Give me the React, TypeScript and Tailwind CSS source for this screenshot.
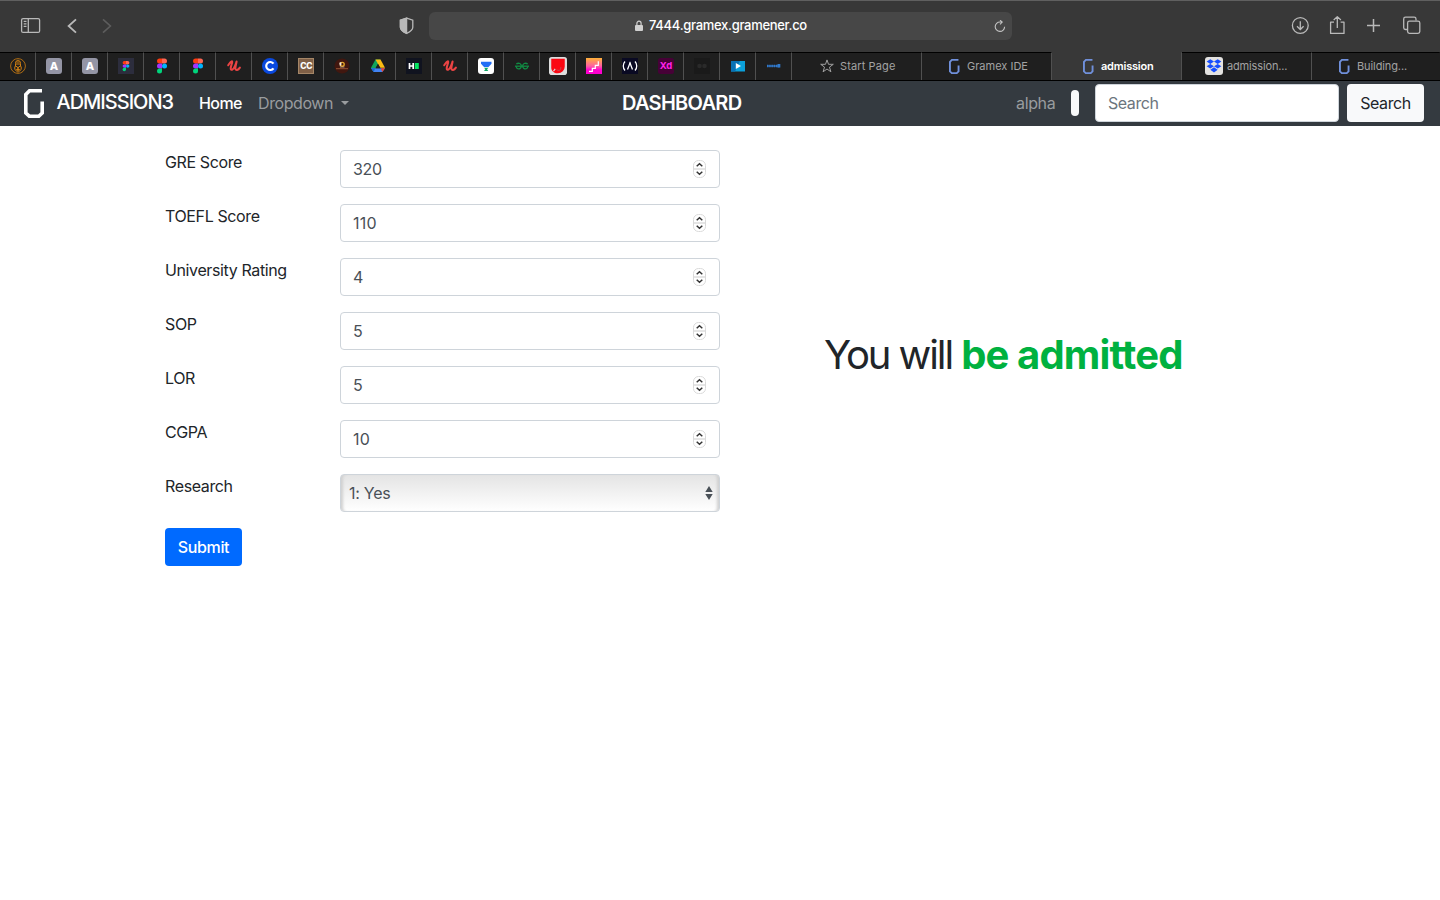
import React from "react";

const svg = (children: React.ReactNode, size = 16) => (
  <svg width={size} height={size} viewBox="0 0 16 16" className="shrink-0">
    {children}
  </svg>
);

const Letter = ({ text, fill, size, y = 12, weight = 800, x = 8, spacing = 0 }: { text: string; fill: string; size: number; y?: number; weight?: number; x?: number; spacing?: number }) => (
  <text x={x} y={y} fill={fill} fontSize={size} fontWeight={weight} letterSpacing={spacing} textAnchor="middle" fontFamily="Inter, sans-serif">
    {text}
  </text>
);

const Figma = () =>
  svg(
    <>
      <path d="M5.500 .5H8v5H5.500a2.500 2.500 0 0 1 0-5z" fill="#ff3b10" />
      <path d="M8 .5h2.500a2.500 2.500 0 0 1 0 5H8z" fill="#ff6654" />
      <path d="M5.500 5.500H8v5H5.500a2.500 2.500 0 0 1 0-5z" fill="#a233ff" />
      <circle cx="10.500" cy="8" r="2.500" fill="#00b4ff" />
      <path d="M5.500 10.500H8V13a2.500 2.500 0 1 1-2.500-2.500z" fill="#00d47c" />
    </>
  );

const FigmaBoxed = () =>
  svg(
    <>
      <rect width="16" height="16" fill="#2c2d3d" />
      <path d="M6.300 3H8v3.400H6.300a1.700 1.700 0 0 1 0-3.400z" fill="#ff3b10" />
      <path d="M8 3h1.700a1.700 1.700 0 0 1 0 3.400H8z" fill="#ff6654" />
      <path d="M6.300 6.400H8v3.400H6.300a1.700 1.700 0 0 1 0-3.400z" fill="#a233ff" />
      <circle cx="9.700" cy="8.100" r="1.700" fill="#00b4ff" />
      <path d="M6.300 9.800H8v1.700a1.700 1.700 0 1 1-1.700-1.700z" fill="#00d47c" />
    </>
  );

const LetterA = () =>
  svg(
    <>
      <rect width="16" height="16" rx="3" fill="#9495a5" />
      <Letter text="A" fill="#fff" size={11} />
    </>
  );

const Udemy = () =>
  svg(
    <path
      d="M2.200 7.300C3.300 5.500 4.800 3.400 6 3.200c1 .2-1.300 4.800-1.300 7.200 0 2.800 2.800 1.200 4.300-2.600l1.600-4.300c-.3 2.300-1.300 4.900-1.200 7 .2 2.500 2.700 1.800 4.500-.9"
      fill="none"
      stroke="#ec4444"
      strokeWidth="2"
      strokeLinecap="round"
      strokeLinejoin="round"
    />
  );

const pinned: React.ReactNode[] = [
  svg(
    <g fill="none" stroke="#d07f11">
      <circle cx="8" cy="8" r="7.400" strokeWidth=".8" />
      <path d="M5.500 5.500c0-4.300 5-4.300 5 0v3H9L8 10 7 8.500H5.500zM6.300 4h3.400M6 6h4M4.800 8.500v3L8 14.300l3.200-2.800v-3M6.200 11.500h3.600" />
      <path d="M8 9.500v3.500" strokeWidth="1.500" />
    </g>
  ),
  <LetterA />,
  <LetterA />,
  <FigmaBoxed />,
  <Figma />,
  <Figma />,
  <Udemy />,
  svg(
    <>
      <circle cx="8" cy="8" r="8" fill="#0a49df" />
      <path d="M11.500 5.700a4 4 0 1 0 0 4.600" fill="none" stroke="#fff" strokeWidth="2.200" />
    </>
  ),
  svg(
    <>
      <rect width="16" height="16" fill="#806047" />
      <rect x=".5" y=".5" width="15" height="15" fill="none" stroke="#a58667" />
      <Letter text="CC" fill="#fff" size={8.5} y={11} x={8.2} spacing={-0.4} />
    </>
  ),
  svg(
    <>
      <circle cx="8" cy="8" r="7.500" fill="#41170f" />
      <circle cx="8.300" cy="6.300" r="1.900" fill="none" stroke="#e3a326" strokeWidth="1.400" />
      <path d="M5.300 4.800 7.300 4v2.500L6 8.500z" fill="#f1e9dd" />
      <path d="M2 10.700h12" stroke="#ac633c" strokeWidth=".8" />
      <path d="M6 9h4.500" stroke="#d8bfa8" strokeWidth=".7" />
    </>
  ),
  svg(
    <>
      <path d="M5.500 1.500h5L8 6 3.800 14 1 9.800z" fill="#12a45c" />
      <path d="M5.500 1.500h5l4.500 8.300h-5z" fill="#fbbc13" />
      <path d="M1 10.200h14L12.300 14H3.700z" fill="#4383f2" />
      <path d="M1 10.200h4.200L3.700 14z" fill="#1967d2" />
      <path d="M10.800 10.200H15L12.300 14z" fill="#ea4335" />
      <path d="M8 5.800 5.400 10.200h5.200z" fill="#1f1f1f" />
    </>
  ),
  svg(
    <>
      <rect width="16" height="16" fill="#10131f" />
      <path d="M3.500 5v6M7.200 5v6M3.500 8h3.700" stroke="#fff" strokeWidth="1.700" />
      <rect x="8.800" y="5" width="4" height="6" fill="#06e462" />
    </>
  ),
  <Udemy />,
  svg(
    <>
      <rect width="16" height="16" rx="3" fill="#fff" />
      <path d="M3 3.700h10.500v2l-3 3.400h-4.500l-3-3.400z" fill="#226ff5" />
      <path d="M6 9.800h4.500L9 11.300l1.300 1.700H6l1.300-1.700z" fill="#12a765" />
    </>
  ),
  svg(
    <g fill="none" stroke="#118b43" strokeWidth="1.300">
      <path d="M2.300 5.800c2.700-1.300 5-.2 5 2.200S5.500 11 4.300 10.800c-1.500-.2-2.200-1.500-2-2.600" />
      <path d="M13.700 5.800c-2.700-1.300-5-.2-5 2.200s1.800 3 3 2.800c1.500-.2 2.200-1.500 2-2.600" />
      <path d="M1 8.200h14" />
    </g>
  ),
  svg(
    <>
      <rect width="16" height="16" rx="2.500" fill="#dedede" />
      <path d="M2 1.500h12v7A6 6 0 0 1 8 14.500C4 14.500 2 12 2 9.500z" fill="#fb0712" />
      <path d="M10.500 9v.8A2 2 0 0 1 6.800 11" fill="none" stroke="#b9505a" strokeWidth=".8" />
      <path d="m4 12.500 1.500-2" stroke="#dedede" />
    </>,
    18
  ),
  svg(
    <>
      <defs>
        <linearGradient id="sunset" x1="0" y1="0" x2="0" y2="1">
          <stop offset="0" stopColor="#ffb338" />
          <stop offset=".5" stopColor="#ff61a0" />
          <stop offset=".75" stopColor="#ff00cf" />
        </linearGradient>
      </defs>
      <rect width="16" height="16" fill="url(#sunset)" />
      <path d="M3 13.300h3.300v-3h3v-3h3v-4" fill="none" stroke="#fff" strokeWidth="1.200" />
    </>
  ),
  svg(
    <>
      <rect width="16" height="16" fill="#0a0a23" />
      <path d="M3 3.500c-2.300 2.500-2.300 6.500 0 9M13 3.500c2.300 2.500 2.300 6.500 0 9M5.500 11.500 8 5l2.500 6.500" fill="none" stroke="#fff" strokeWidth="1.300" />
      <path d="m7 6.300 1-2.500 1 2.500z" fill="#fff" />
    </>
  ),
  svg(
    <>
      <rect width="16" height="16" rx="2.500" fill="#470137" />
      <Letter text="Xd" fill="#ff20ea" size={9.5} y={11.4} weight={700} />
    </>
  ),
  svg(
    <>
      <rect width="16" height="16" fill="#1a1a1a" />
      <circle cx="5.500" cy="8" r="2.300" fill="#2a2a2a" />
      <circle cx="10.500" cy="8" r="2.300" fill="#2a2a2a" />
    </>
  ),
  svg(
    <>
      <rect x="1" y="3" width="14" height="10.500" fill="#0ba0da" />
      <path d="M1 3h9L5 13.500H1z" fill="#0871b5" />
      <path d="M5.800 5 11 8l-5.200 3z" fill="#fff" />
    </>
  ),
  svg(
    <>
      <path d="M1 8h13" stroke="#3079cb" strokeWidth="2.600" strokeDasharray="1.500 .7" />
      <path d="M1 8h13" stroke="#3079cb" strokeWidth="1" />
      <path d="M11.500 6h2.800v3.500h-3z" fill="#3079cb" />
    </>
  ),
];

const GMark = ({ className, stroke }: { className: string; stroke: string }) => (
  <svg viewBox="0 0 20 29" className={className} fill="none" stroke={stroke} strokeWidth="3.600" preserveAspectRatio="none">
    <path d="M18 1.800H5.500L1.800 5.500V24l3.500 3.200h9.500l3.400-3.200V12.500" />
  </svg>
);

const Star = () => (
  <svg width="14" height="14" viewBox="0 0 14 14" fill="none" stroke="#a0a0a0" className="-mt-[2px]">
    <path d="m7 .9 1.500 4.400h4.800L9.500 8.100l1.400 4.700L7 10l-3.900 2.800 1.400-4.700L.7 5.300h4.800z" strokeLinejoin="round" />
  </svg>
);

const Dropbox = () => (
  <svg width="18" height="18" viewBox="0 0 18 18" className="-mt-px">
    <rect width="18" height="18" rx="3" fill="#e4e3e1" />
    <path d="m5.300 2.300 3.700 2.300-3.700 2.300-3.700-2.300zM12.700 2.300l3.700 2.300-3.700 2.300L9 4.600zM5.300 6.900 9 9.200l-3.700 2.300-3.700-2.300zM12.700 6.900l3.700 2.300-3.700 2.300L9 9.200zM9 10.200l3.700 2.500L9 15.500l-3.700-2.800z" fill="#174eff" />
  </svg>
);

const TabMark = () => <GMark className="-mt-px h-[15px] w-[10.500px]" stroke="#7090db" />;

const tabs = [
  { label: "Start Page", icon: <Star />, pad: "pl-[28px] gap-[6px]", text: "tracking-[0.12px]" },
  { label: "Gramex IDE", icon: <TabMark />, pad: "pl-[27px] gap-[7.500px]", text: "tracking-[0px]" },
  { label: "admission", icon: <TabMark />, pad: "pl-[31px] gap-[7.500px]", text: "tracking-[-0.2px]", active: true },
  { label: "admission...", icon: <Dropbox />, pad: "pl-[23px] gap-[4px]", text: "tracking-[-0.15px]" },
  { label: "Building...", icon: <TabMark />, pad: "pl-[27px] gap-[7.500px]", text: "tracking-[-0.1px]" },
];

const fields = [
  { label: "GRE Score", value: "320" },
  { label: "TOEFL Score", value: "110" },
  { label: "University Rating", value: "4" },
  { label: "SOP", value: "5" },
  { label: "LOR", value: "5" },
  { label: "CGPA", value: "10" },
];

const Toolbar = () => (
  <div className="flex h-[52px] items-center border-t border-[#606060] bg-[#383838]">
    <svg width="1440" height="51" viewBox="0 1 1440 51" fill="none" stroke="#b9b9b9" strokeWidth="1.300" className="w-[429px] shrink-0" preserveAspectRatio="xMinYMin slice">
      <rect x="21.600" y="18.600" width="18" height="13.800" rx="1.500" />
      <path d="M28.300 18.600v13.800M23.700 21.300h2.800M23.700 23.800h2.800M23.700 26.300h2.800" />
      <path d="m76 19.300-7.400 6.700 7.400 6.700" strokeWidth="1.800" />
      <path d="m103 19.300 7.400 6.700-7.400 6.700" stroke="#5d5d5d" strokeWidth="1.600" />
      <path d="m406.600 18.200 6.200 2v7c0 3-3 4.700-6.200 6.100-3.200-1.400-6.200-3.100-6.200-6.100v-7z" />
      <path d="m406.600 18.200-6.200 2v7c0 3 3 4.700 6.200 6.100z" fill="#b9b9b9" />
    </svg>
    <div className="mb-px flex h-[28px] w-[583px] shrink-0 items-center rounded-[6px] bg-[#474747] pl-[206px]">
      <svg width="8" height="12" viewBox="0 0 8 12" fill="none" stroke="#d0d0d0" strokeWidth="1.200">
        <rect x="0" y="5" width="8" height="6" rx="1" fill="#d0d0d0" stroke="none" />
        <path d="M1.900 5.500V3.300a2.100 2.100 0 0 1 4.200 0v2.200" />
      </svg>
      <span className="ml-[6px] w-[159px] whitespace-nowrap text-[13px] font-medium tracking-[-0.3px] text-white">7444.gramex.gramener.co</span>
      <svg width="12" height="13" viewBox="0 0 12 13" className="ml-auto mr-[6px]" fill="none" stroke="#c2c2c2" strokeWidth="1.100">
        <path d="M10.600 6.700A4.700 4.700 0 1 1 6 2h2M6 .2 8.200 2.100 6 4.300" />
      </svg>
    </div>
    <svg height="51" viewBox="1012 1 428 51" fill="none" stroke="#b9b9b9" strokeWidth="1.300" className="w-[428px] shrink-0">
      <circle cx="1300.300" cy="25.500" r="7.900" />
      <path d="M1300.300 21.300v8M1297 26.300l3.300 3.200 3.300-3.200" />
      <path d="M1334 22.200h-3.400v11.200h13.400V22.200h-3.400M1337.300 28V16.800M1333.700 20l3.600-3.400 3.600 3.400" strokeLinejoin="round" />
      <path d="M1373.500 19v13M1367 25.500h13" strokeWidth="1.500" />
      <rect x="1407.600" y="21.100" width="12.200" height="12.200" rx="1.800" />
      <path d="M1407 29.500h-1.500a1.800 1.800 0 0 1-1.800-1.800v-8.700a1.800 1.800 0 0 1 1.800-1.800h8.700a1.800 1.800 0 0 1 1.800 1.800v1.500" />
    </svg>
  </div>
);

const TabBar = () => (
  <div className="flex h-[29px] border-b border-black">
    {pinned.map((icon, i) => (
      <div key={i} className="flex w-[36px] shrink-0 items-center justify-center border-r border-t border-r-[#505050] border-t-black bg-[#1f1f1f] pb-px">
        {icon}
      </div>
    ))}
    {tabs.map((t, i) => (
      <div
        key={i}
        className={`flex shrink-0 items-center whitespace-nowrap border-r border-t text-[11px] ${t.pad} ${i === 4 ? "w-[128px] border-r-transparent" : "w-[130px] border-r-[#505050]"} ${
          t.active ? "border-t-transparent bg-[#383838] font-semibold text-white" : "border-t-black bg-[#1f1f1f] text-[#a3a3a3]"
        }`}
      >
        {t.icon}
        <span className={t.text}>{t.label}</span>
      </div>
    ))}
  </div>
);

const Navbar = () => (
  <nav className="flex h-[45px] items-center whitespace-nowrap bg-[#343a40] pb-[2px] pl-[24px] pr-[16px]">
    <GMark className="mt-px h-[29px] w-[20px] shrink-0" stroke="#ffffff" />
    <span className="ml-[12.500px] w-[142.500px] shrink-0 pb-px text-[20px] font-medium tracking-[-1px] text-white">ADMISSION3</span>
    <span className="w-[59px] shrink-0 text-[16px] font-medium tracking-[-0.6px] text-white">Home</span>
    <span className="w-[83px] shrink-0 text-[16px] tracking-[-0.42px] text-[#999c9f]">Dropdown</span>
    <svg width="8" height="4" viewBox="0 0 8 4" fill="#999c9f">
      <path d="M0 0h8L4 4z" />
    </svg>
    <span className="ml-[273px] w-[394px] shrink-0 text-[20px] font-semibold tracking-[-0.7px] text-white">DASHBOARD</span>
    <span className="w-[55px] shrink-0 text-[16px] tracking-[-0.35px] text-[#999c9f]">alpha</span>
    <span className="h-[26px] w-[8px] shrink-0 rounded-[4px] bg-[#f8f9fa]" />
    <div className="ml-[16px] flex h-[38px] w-[244px] shrink-0 items-center rounded-[4px] border border-[#ced4da] bg-white pl-[12px] text-[16px] tracking-[-0.45px] text-[#6c757d]">Search</div>
    <button className="ml-[8px] h-[38px] w-[77px] shrink-0 rounded-[4px] bg-[#f8f9fa] text-[16px] tracking-[-0.4px] text-[#212529]">Search</button>
  </nav>
);

const Stepper = () => (
  <svg width="13" height="18" viewBox="0 0 13 18" fill="none">
    <rect x=".5" y=".5" width="12" height="17" rx="5" fill="#fff" stroke="#dadada" />
    <path d="M1 9h11" stroke="#dddddd" strokeWidth="1.500" />
    <path d="m3.700 6.300 2.800-2.500 2.800 2.500M3.700 11.700l2.800 2.500 2.800-2.500" stroke="#333" strokeWidth="1.500" />
  </svg>
);

export default function App() {
  return (
    <div className="flex h-[900px] w-[1440px] flex-col overflow-hidden bg-white font-['Inter','Liberation_Sans',sans-serif] text-[#212529]">
      <Toolbar />
      <TabBar />
      <Navbar />
      <main className="flex pl-[165px] pt-[24px] text-[16px] leading-[24px] tracking-[-0.38px]">
        <form className="flex w-[555px] flex-col gap-[16px]">
          {fields.map((f) => (
            <div key={f.label} className="flex h-[38px]">
              <label className="w-[175px]">{f.label}</label>
              <div className="flex flex-1 items-center justify-between rounded-[4px] border border-[#ced4da] pl-[12px] pr-[13px] text-[#495057]">
                <span className={f.value === "320" ? "tracking-[-0.3px]" : "tracking-[0.2px]"}>{f.value}</span>
                <Stepper />
              </div>
            </div>
          ))}
          <div className="flex h-[38px]">
            <label className="w-[175px]">Research</label>
            <div className="flex flex-1 items-center justify-between rounded-[4px] border border-[#ced4da] bg-linear-to-b from-[#e4e4e4] to-white pl-[8px] pr-[6px] text-[#495057] shadow-[inset_4px_0_3px_-2px_#d0d0d0,inset_-4px_0_3px_-2px_#d0d0d0]">
              <span className="tracking-[-0.25px]">1: Yes</span>
              <svg width="8" height="14" viewBox="0 0 8 14" fill="#495057">
                <path d="M.3 6h7.400L4 0zM.3 8h7.400L4 14z" />
              </svg>
            </div>
          </div>
          <button type="button" className="h-[38px] w-[77px] rounded-[4px] bg-[#006aff] font-medium text-white">
            Submit
          </button>
        </form>
        <h1 className="ml-[104px] mt-[181px] whitespace-nowrap text-[40px] leading-[48px] tracking-[-2.1px]">
          You will <strong className="font-bold tracking-[-0.85px] text-[#00b140]">be admitted</strong>
        </h1>
      </main>
    </div>
  );
}
